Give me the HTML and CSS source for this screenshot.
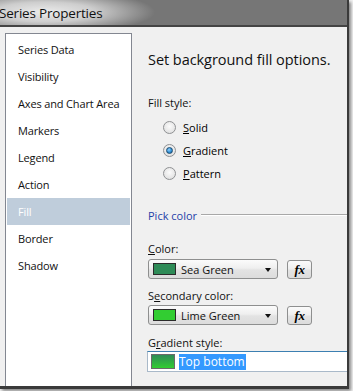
FILE: index.html
```html
<!DOCTYPE html>
<html>
<head>
<meta charset="utf-8">
<link rel="stylesheet" href="styles.css">
</head>
<body>
<div class="window">
  <div class="titlebar"><span class="title">Series Properties</span></div>
  <div class="main">
    <ul class="nav">
      <li>Series Data</li>
      <li>Visibility</li>
      <li>Axes and Chart Area</li>
      <li>Markers</li>
      <li>Legend</li>
      <li>Action</li>
      <li class="sel">Fill</li>
      <li>Border</li>
      <li>Shadow</li>
    </ul>
    <div class="content">
      <h1 class="heading">Set background fill options.</h1>
      <div class="label first">Fill style:</div>
      <div class="radios">
        <div class="radio"><span class="dot"></span><span><u>S</u>olid</span></div>
        <div class="radio"><span class="dot on"></span><span><u>G</u>radient</span></div>
        <div class="radio"><span class="dot"></span><span><u>P</u>attern</span></div>
      </div>
      <div class="group"><span>Pick color</span><span class="rule"></span></div>
      <div class="label l-color"><u>C</u>olor:</div>
      <div class="pickrow">
        <div class="combo"><span class="sw sea"></span><span class="ctext">Sea Green</span><span class="arrow"></span></div>
        <div class="fx">fx</div>
      </div>
      <div class="label l-sec">S<u>e</u>condary color:</div>
      <div class="pickrow">
        <div class="combo"><span class="sw lime"></span><span class="ctext">Lime Green</span><span class="arrow"></span></div>
        <div class="fx">fx</div>
      </div>
      <div class="label l-grad">G<u>r</u>adient style:</div>
      <div class="input"><span class="sw grad"></span><span class="hl">Top bottom</span></div>
    </div>
  </div>
</div>
</body>
</html>
```
FILE: styles.css
```css
html, body {
  margin: 0;
  padding: 0;
}
body {
  width: 353px;
  height: 391px;
  overflow: hidden;
  background: #f2f2f2;
  font-family: "Open Sans", "Noto Sans", sans-serif;
  font-size: 11px;
  color: #000;
}
.window {
  display: flex;
  flex-direction: column;
  background: #f0f0f0;
  border-right: 2px solid #3a3a3a;
  border-bottom: 3px solid #3a3a3a;
  box-shadow: 2px 2px 3px rgba(0,0,0,0.45);
  box-sizing: border-box;
  width: 349px;
  height: 389px;
}
.titlebar {
  height: 25px;
  flex: none;
  border-bottom: 2px solid #444;
  background:
    radial-gradient(ellipse 110px 22px at 45px 12px, rgba(235,235,235,1) 0%, rgba(215,215,215,0.9) 45%, rgba(118,118,118,0) 100%),
    #767676;
  display: flex;
  align-items: center;
  box-sizing: content-box;
}
.title {
  font-size: 13.5px;
  color: #111;
  margin-left: -1px;
  letter-spacing: -0.2px;
}
.main {
  flex: 1;
  display: flex;
  padding-top: 6px;
  min-height: 0;
}
.nav {
  list-style: none;
  margin: 0 0 0 5px;
  padding: 2px 1px 0 1px;
  width: 123px;
  background: #fff;
  border: 1px solid #838791;
  border-bottom: none;
  flex: none;
}
.nav li {
  height: 27px;
  line-height: 27px;
  padding-left: 11px;
  color: #111;
  white-space: nowrap;
  letter-spacing: -0.15px;
}
.nav li.sel {
  background: #bfcddb;
  color: #fff;
}
.content {
  flex: 1;
  padding-left: 16px;
  padding-top: 17px;
  min-width: 0;
}
.heading {
  margin: 0;
  font-weight: normal;
  font-size: 14.5px;
  line-height: 20px;
  height: 20px;
  white-space: nowrap;
  color: #111;
  letter-spacing: -0.05px;
}
.label {
  line-height: 16px;
  height: 16px;
  white-space: nowrap;
  color: #111;
}
.label.first { margin-top: 25px; }
.radios {
  margin-top: 5px;
  padding-left: 15px;
}
.radio {
  height: 23px;
  display: flex;
  align-items: center;
  gap: 7px;
}
.dot {
  width: 11px;
  height: 11px;
  border-radius: 50%;
  border: 1px solid #8f9193;
  background: radial-gradient(circle at 50% 40%, #fbfbfb 0%, #e4e4e4 70%, #d2d2d2 100%);
  display: flex;
  align-items: center;
  justify-content: center;
  flex: none;
}
.dot.on::after {
  content: "";
  width: 5px;
  height: 5px;
  border-radius: 50%;
  border: 1px solid #1b4a6e;
  background: radial-gradient(circle at 40% 35%, #8fd0ff 0%, #2a8ad0 60%, #1a5a90 100%);
}
.group {
  margin-top: 22px;
  height: 16px;
  display: flex;
  align-items: center;
  gap: 4px;
  color: #1f3fa8;
  white-space: nowrap;
}
.rule {
  flex: 1;
  height: 1px;
  background: #a8a8a8;
  border-bottom: 1px solid #fff;
}
.l-color { margin-top: 18px; }
.l-sec { margin-top: 9px; }
.l-grad { margin-top: 10px; }
.pickrow {
  margin-top: 2px;
  display: flex;
  align-items: flex-start;
  gap: 9px;
}
.l-sec + .pickrow { margin-top: 1px; }
.combo {
  height: 18px;
  border: 1px solid #8e8f8f;
  border-radius: 3px;
  background: linear-gradient(#fbfbfb 0%, #efefef 45%, #e3e3e3 55%, #dcdcdc 100%);
  display: flex;
  align-items: center;
  padding-left: 4px;
  box-sizing: content-box;
  width: 124px;
}
.sw {
  width: 21px;
  height: 10px;
  border: 1px solid #2b2b2b;
  flex: none;
}
.sea { background: #2e8b57; }
.lime { background: #32cd32; }
.ctext {
  margin-left: 5px;
  flex: 1;
  white-space: nowrap;
  color: #111;
}
.arrow {
  width: 0;
  height: 0;
  border-left: 3.5px solid transparent;
  border-right: 3.5px solid transparent;
  border-top: 4px solid #111;
  margin-right: 6px;
  margin-top: 1px;
}
.fx {
  width: 23px;
  height: 17px;
  margin-top: 1px;
  border: 1px solid #8e8f8f;
  border-radius: 3px;
  background: linear-gradient(#fbfbfb 0%, #efefef 45%, #e3e3e3 55%, #dcdcdc 100%);
  font-family: "Liberation Serif", serif;
  font-style: italic;
  font-weight: bold;
  font-size: 13px;
  line-height: 17px;
  text-align: center;
  letter-spacing: -0.5px;
}
.input {
  margin-left: -1px;
  height: 19px;
  background: #fff;
  border: 1px solid #a9b9c9;
  border-top-color: #3c7fb1;
  border-right: none;
  display: flex;
  align-items: center;
  padding-left: 3px;
}
.sw.grad {
  width: 22px;
  height: 13px;
  border: 1px solid #6a6a6a;
  background: linear-gradient(#2e8b57, #32cd32);
}
.hl {
  margin-left: 4px;
  background: #3399ff;
  color: #fff;
  line-height: 16px;
  padding-right: 1px;
  font-size: 12px;
}
u { text-decoration: underline; text-underline-offset: 1px; }
```
